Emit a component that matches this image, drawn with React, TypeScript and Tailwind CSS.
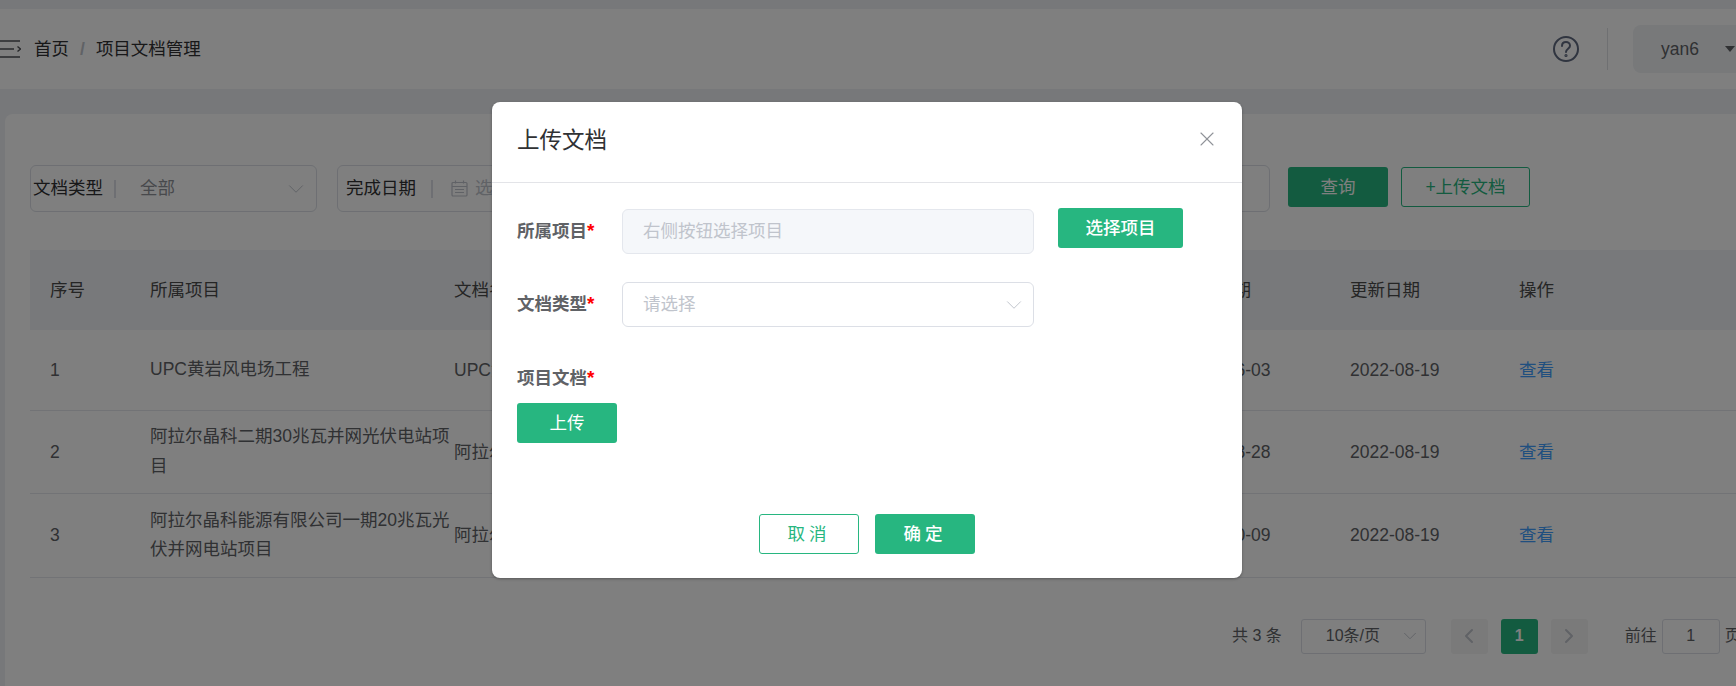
import { ChevronDown, ChevronLeft, ChevronRight, X } from "lucide-react";

const FONT = "font-['Liberation_Sans','Noto_Sans_CJK_SC',sans-serif]";

const rows = [
  { id: 1, project: "UPC黄岩风电场工程", doc: "UPC黄", done: "2022-06-03", updated: "2022-08-19" },
  { id: 2, project: "阿拉尔晶科二期30兆瓦并网光伏电站项目", doc: "阿拉尔", done: "2022-08-28", updated: "2022-08-19" },
  { id: 3, project: "阿拉尔晶科能源有限公司一期20兆瓦光伏并网电站项目", doc: "阿拉尔", done: "2021-10-09", updated: "2022-08-19" },
];

const FoldIcon = () => (
  <svg width="21" height="18" viewBox="0 0 21 18" fill="none" stroke="#505257" strokeWidth="1.5">
    <path d="M0 1h20M0 9h14M0 17h20" />
    <path d="M17.500 6.500l3 2.500-3 2.500" />
  </svg>
);

const Required = ({ text }: { text: string }) => (
  <span className="text-[17.500px] font-bold text-[#606266] whitespace-nowrap">
    {text}
    <span className="text-[19px] leading-none text-[#ff0000]">*</span>
  </span>
);

const App = () => {
  return (
    <div className={`${FONT} relative w-[1736px] h-[686px] overflow-hidden bg-[#eff1f4]`}>
      {/* 页面头部 */}
      <div className="mt-[9px] h-[80px] bg-white flex items-center">
        <FoldIcon />
        <div className="ml-[13px] flex items-center text-[17.500px] text-[#303133]">
          <span>首页</span>
          <span className="mx-[11px] text-[#c0c4cc] font-bold">/</span>
          <span>项目文档管理</span>
        </div>
        <div className="ml-auto mr-[-30px] flex items-center">
          <svg width="28" height="28" viewBox="0 0 28 28" fill="none" stroke="#606a80" strokeWidth="2">
            <circle cx="14" cy="14" r="12" />
            <path d="M10 11c0-2.500 1.800-4 4-4s4 1.500 4 3.700c0 3-4 3-4 6.300" strokeLinecap="round" />
            <circle cx="14" cy="20.500" r="0.600" />
          </svg>
          <div className="ml-[27px] w-px h-[42px] bg-[#dfe1e5]" />
          <div className="ml-[25px] w-[133px] h-[48px] rounded-lg bg-[#f0f2f5] flex items-center pl-[28px] text-[17.500px] text-[#606266]">
            <span>yan6</span>
            <span className="ml-[26px] w-0 h-0 border-x-[5.500px] border-x-transparent border-t-[6px] border-t-[#606266]" />
          </div>
        </div>
      </div>

      {/* 内容卡片 */}
      <div className="mt-[25px] ml-[5px] w-[1800px] h-[600px] bg-white rounded-lg pt-[51px] pl-[25px]">
        <div className="flex items-start">
          <div className="w-[287px] h-[47px] rounded-md border border-[#dcdfe6] flex items-center pl-[2px] pr-[13px] text-[17.500px]">
            <span className="text-[#303133]">文档类型</span>
            <span className="ml-[11px] w-0.5 h-[18px] bg-[#dcdfe6]" />
            <span className="ml-[24px] text-[#909399]">全部</span>
            <ChevronDown className="ml-auto mr-[-6px] text-[#c0c4cc]" size={26} strokeWidth={0.9} />
          </div>
          <div className="ml-[20px] w-[933px] h-[47px] rounded-md border border-[#dcdfe6] flex items-center pl-[8px] text-[17.500px]">
            <span className="text-[#303133]">完成日期</span>
            <span className="ml-[15px] w-0.5 h-[18px] bg-[#dcdfe6]" />
            <svg className="ml-[18px]" width="17" height="17" viewBox="0 0 17 17" fill="none" stroke="#c0c4cc" strokeWidth="1.200">
              <rect x="1" y="2.500" width="15" height="13.500" rx="1" />
              <path d="M1 6.500h15M4.500 0.500v3M12.500 0.500v3M4 9.500h9M4 12.500h9" />
            </svg>
            <span className="ml-[7px] text-[#c0c4cc]">选择日期</span>
          </div>
          <button className="mt-[2px] ml-[18px] w-[100px] h-[40px] rounded-[3px] bg-[#27b680] text-white text-[17.500px]">查询</button>
          <button className="mt-[2px] ml-[13px] w-[129px] h-[40px] rounded-[3px] border border-[#27b680] text-[#27b680] text-[17.500px]">+上传文档</button>
        </div>

        <table className="mt-[38px] w-[1706px] table-fixed text-left text-[17.500px] text-[#606266] border-collapse">
          <thead>
            <tr className="h-[80px] bg-[#f0f3f6] text-[#4a4a4a]">
              <th className="w-[120px] pl-5 font-normal">序号</th>
              <th className="w-[304px] font-normal">所属项目</th>
              <th className="w-[727px] font-normal">文档名</th>
              <th className="w-[169px] font-normal">完成日期</th>
              <th className="w-[169px] font-normal">更新日期</th>
              <th className="font-normal">操作</th>
            </tr>
          </thead>
          <tbody>
            {rows.map((row) => (
              <tr className={`border-b border-[#e4e7ed] ${row.id === 1 ? "h-[80px]" : "h-[83.500px]"}`} key={row.id}>
                <td className="pl-5">{row.id}</td>
                <td className="pr-1 leading-[29.300px]">{row.project}</td>
                <td className="whitespace-nowrap">{row.doc}</td>
                <td>{row.done}</td>
                <td>{row.updated}</td>
                <td className="text-[#409eff]">查看</td>
              </tr>
            ))}
          </tbody>
        </table>

        {/* 分页 */}
        <div className="mt-[41px] ml-[1202px] flex items-center text-[16px] text-[#606266] whitespace-nowrap">
          <span>共 3 条</span>
          <div className="ml-[19px] w-[125px] h-[35px] rounded-[3px] border border-[#dcdfe6] flex items-center pl-[24px] pr-[4px]">
            <span>10条/页</span>
            <ChevronDown className="ml-auto text-[#c0c4cc]" size={22} strokeWidth={1} />
          </div>
          <div className="ml-[25px] w-[37px] h-[35px] rounded-[3px] bg-[#f4f4f5] flex items-center justify-center">
            <ChevronLeft className="text-[#c0c4cc]" size={24} strokeWidth={2} />
          </div>
          <div className="ml-[13px] w-[37px] h-[35px] rounded-[3px] bg-[#27b680] text-white font-bold flex items-center justify-center">1</div>
          <div className="ml-[13px] w-[37px] h-[35px] rounded-[3px] bg-[#f4f4f5] flex items-center justify-center">
            <ChevronRight className="text-[#c0c4cc]" size={24} strokeWidth={2} />
          </div>
          <span className="ml-[37px]">前往</span>
          <div className="ml-[5px] w-[58px] h-[35px] rounded-[3px] border border-[#dcdfe6] flex items-center justify-center">1</div>
          <span className="ml-[5px]">页</span>
        </div>
      </div>

      {/* 遮罩 */}
      <div className="absolute inset-0 bg-black/50" />

      {/* 上传文档弹窗 */}
      <div className="absolute left-[492px] top-[102px] w-[750px] h-[476px] rounded-lg bg-white shadow-[0_1px_3px_rgba(0,0,0,0.3)]">
        <div className="h-[81px] border-b border-[#e3e4e8] flex items-center pl-[25px] pr-[23px]">
          <span className="mb-[2px] text-[22.500px] text-[#303133]">上传文档</span>
          <X className="ml-auto mb-[6px] text-[#909399]" size={24} strokeWidth={1.1} />
        </div>

        <div className="pl-[25px]">
          <div className="mt-[26px] flex items-center h-[45px]">
            <div className="w-[105px]"><Required text="所属项目" /></div>
            <div className="w-[412px] h-[45px] rounded-md border border-[#e4e7ed] bg-[#f5f7fa] flex items-center pl-[20px] text-[17.500px] text-[#c0c4cc]">
              右侧按钮选择项目
            </div>
            <button className="ml-[24px] mb-[7px] w-[125px] h-[40px] rounded-[3px] bg-[#27b680] text-white text-[17.500px] font-medium">选择项目</button>
          </div>
          <div className="mt-[28px] flex items-center h-[45px]">
            <div className="w-[105px]"><Required text="文档类型" /></div>
            <div className="w-[412px] h-[45px] rounded-md border border-[#dcdfe6] flex items-center pl-[20px] pr-[6px] text-[17.500px] text-[#c0c4cc]">
              请选择
              <ChevronDown className="ml-auto text-[#c0c4cc]" size={26} strokeWidth={0.9} />
            </div>
          </div>
          <div className="mt-[39px] leading-[24px]"><Required text="项目文档" /></div>
          <button className="mt-[12px] w-[100px] h-[40px] rounded-[3px] bg-[#27b680] text-white text-[17.500px]">上传</button>
        </div>

        <div className="mt-[71px] flex justify-center gap-4">
          <button className="w-[100px] h-[40px] rounded-[3px] border border-[#27b680] text-[#27b680] text-[17.500px] tracking-[4px]">取消</button>
          <button className="w-[100px] h-[40px] rounded-[3px] bg-[#27b680] text-white text-[17.500px] font-medium tracking-[4px]">确定</button>
        </div>
      </div>
    </div>
  );
};

export default App;
